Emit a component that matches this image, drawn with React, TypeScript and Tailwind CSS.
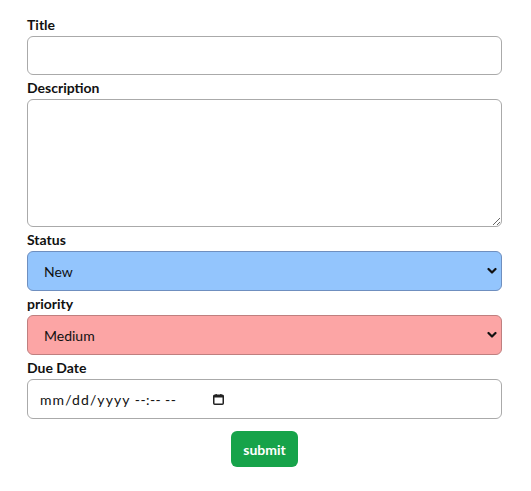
import { useState } from "react";

function Chevron() {
  return (
    <svg
      className="pointer-events-none absolute right-[5px] top-1/2 -translate-y-1/2"
      width="10"
      height="7"
      viewBox="0 0 10 7"
      fill="none">
      <path d="M1.5 1.5 5 5 8.5 1.5" stroke="#111" strokeWidth="2.2" strokeLinecap="round" strokeLinejoin="round" />
    </svg>
  );
}

function CalendarIcon() {
  return (
    <svg width="11" height="11" viewBox="0 0 11 11" fill="none">
      <rect x="0.75" y="1.25" width="9.5" height="9" rx="1" stroke="#222" strokeWidth="1.5" />
      <rect x="0.75" y="1" width="9.5" height="2.5" fill="#222" />
      <rect x="2.5" y="0" width="1.3" height="2" fill="#222" />
      <rect x="7.2" y="0" width="1.3" height="2" fill="#222" />
    </svg>
  );
}

export default function App() {
  const [title, setTitle] = useState("");
  const [desc, setDesc] = useState("");
  const [status, setStatus] = useState("New");
  const [priority, setPriority] = useState("Medium");
  const [due, setDue] = useState("");

  const label = "block text-[14px] font-bold leading-[19px] text-[#111]";
  const field = "mt-[2px] w-full rounded-md border border-[#aaa] bg-white px-4 text-[14px] outline-none";

  return (
    <div className="min-h-screen bg-white font-['Lato','Liberation_Sans',sans-serif] text-[#111]">
      <form
        className="ml-[27px] w-[475px] pt-[15px]"
        onSubmit={(e) => e.preventDefault()}>
        <label className={label}>Title</label>
        <input value={title} onChange={(e) => setTitle(e.target.value)} className={`${field} h-[39px]`} />

        <label className={`${label} mt-[3px]`}>Description</label>
        <textarea value={desc} onChange={(e) => setDesc(e.target.value)} className={`${field} block h-[128px] py-2`} />

        <label className={`${label} mt-[3px]`}>Status</label>
        <div className="relative mt-[2px]">
          <select
            value={status}
            onChange={(e) => setStatus(e.target.value)}
            className="h-[40px] w-full appearance-none rounded-md border border-[#6f8fbf] bg-[#93c5fd] pl-4 text-[14px] outline-none">
            <option>New</option>
            <option>In Progress</option>
            <option>Done</option>
          </select>
          <Chevron />
        </div>

        <label className={`${label} mt-[3px]`}>priority</label>
        <div className="relative mt-[2px]">
          <select
            value={priority}
            onChange={(e) => setPriority(e.target.value)}
            className="h-[40px] w-full appearance-none rounded-md border border-[#bf7f7f] bg-[#fca5a5] pl-4 text-[14px] outline-none">
            <option>Low</option>
            <option>Medium</option>
            <option>High</option>
          </select>
          <Chevron />
        </div>

        <label className={`${label} mt-[3px]`}>Due Date</label>
        <div className="relative mt-[2px] flex h-[40px] w-full items-center rounded-md border border-[#aaa] bg-white pl-[12px] text-[14px]">
          <span className="w-[173px] tracking-[0.6px]">
            {due ? due.replace("T", " ") : (
              <>
                <span className="tracking-[1.1px]">mm/dd/yyyy</span> <span className="tracking-[0.4px]">--:-- --</span>
              </>
            )}
          </span>
          <CalendarIcon />
          <input
            type="datetime-local"
            value={due}
            onChange={(e) => setDue(e.target.value)}
            className="absolute inset-0 opacity-0"
          />
        </div>

        <div className="mt-3 flex justify-center">
          <button
            type="submit"
            className="h-9 rounded-md bg-[#16a34a] px-3 text-[14px] font-bold text-white">
            submit
          </button>
        </div>
      </form>
    </div>
  );
}
